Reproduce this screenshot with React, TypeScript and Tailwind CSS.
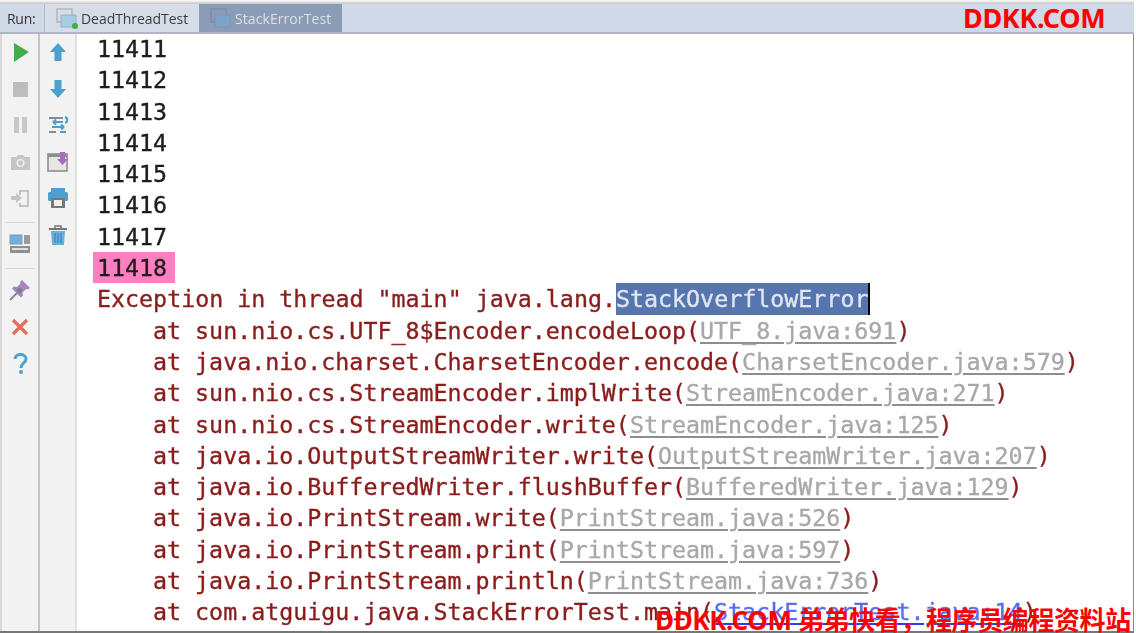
import React from "react";

const mono = "font-['DejaVu_Sans_Mono','Liberation_Mono',monospace]";

const traces: [string, string][] = [
  ["sun.nio.cs.UTF_8$Encoder.encodeLoop", "UTF_8.java:691"],
  ["java.nio.charset.CharsetEncoder.encode", "CharsetEncoder.java:579"],
  ["sun.nio.cs.StreamEncoder.implWrite", "StreamEncoder.java:271"],
  ["sun.nio.cs.StreamEncoder.write", "StreamEncoder.java:125"],
  ["java.io.OutputStreamWriter.write", "OutputStreamWriter.java:207"],
  ["java.io.BufferedWriter.flushBuffer", "BufferedWriter.java:129"],
  ["java.io.PrintStream.write", "PrintStream.java:526"],
  ["java.io.PrintStream.print", "PrintStream.java:597"],
  ["java.io.PrintStream.println", "PrintStream.java:736"],
];

const TabIcon = ({ dot, dim }: { dot?: boolean; dim?: boolean }) => (
  <svg width="22" height="22" viewBox="0 0 22 22" className="shrink-0">
    <rect x="1" y="2" width="15" height="13" fill="none" stroke={dim ? "#7f8ca3" : "#b5b5b5"} strokeWidth="1.5" />
    <rect x="5" y="8" width="15" height="12" fill={dim ? "#7ea3c9" : "#a9cce6"} stroke={dim ? "#7896b8" : "#8fb2cc"} />
    {dot && <circle cx="19" cy="19" r="3" fill="#3fae49" />}
  </svg>
);

const Tool = ({ children }: { children: React.ReactNode }) => (
  <div className="h-[36.5px] flex items-center justify-center">
    <svg width="24" height="24" viewBox="0 0 24 24">
      {children}
    </svg>
  </div>
);

const TraceLine = ({ call, file }: { call: string; file: string }) => (
  <div className="h-[31.3px] pl-[56px] text-[#8a1c1c] whitespace-pre">
    at {call}(
    <span className="text-[#a8a8a8] underline decoration-[#8e8e8e] underline-offset-[3px]">{file}</span>)
  </div>
);

export default function App() {
  return (
    <div className="relative w-[1136px] h-[633px] overflow-hidden bg-white">
      <div className="w-full h-full flex flex-col blur-[0.5px]">
        <div className="h-[4px] shrink-0 mr-[2px] bg-linear-to-b from-white to-[#c4c4c4]" />
        {/* tab bar */}
        <div className="h-[30px] shrink-0 flex bg-[#d0d9e8] border-b-2 border-[#aeb6c6] mr-[2px] font-['Open_Sans',sans-serif] text-[14px]">
          <div className="w-[45px] flex items-center pl-[7px] text-[#333] border-r border-[#b4bccb] tracking-[-0.3px]">Run:</div>
          <div className="w-[154px] flex items-center gap-[3px] pl-[11px] text-[#3c3c3c] bg-[#d6dde9]">
            <TabIcon dot />
            <span className="text-[14px] tracking-[-0.05px]">DeadThreadTest</span>
          </div>
          <div className="w-[143px] flex items-center gap-[3px] pl-[11px] text-[#d9dfe9] bg-[#8d9cb6]">
            <TabIcon dim />
            <span className="text-[14px] tracking-[0.08px]">StackErrorTest</span>
          </div>
        </div>

        <div className="flex-1 flex min-h-0 mr-[2px] border-b-2 border-r border-b-[#777777] border-r-[#8c8c8c] bg-white">
          {/* run actions */}
          <div className="w-[2px] shrink-0 bg-[#d8d8d8]" />
          <div className="w-[36px] shrink-0 bg-[#f2f2f2] flex flex-col">
            <Tool>
              <polygon points="6,3 21,12 6,22" fill="#3fae49" />
            </Tool>
            <Tool>
              <rect x="5" y="5" width="15" height="15" fill="#bdbdbd" />
            </Tool>
            <Tool>
              <rect x="6" y="4" width="5" height="16" fill="#c8c8c8" />
              <rect x="14" y="4" width="5" height="16" fill="#c8c8c8" />
            </Tool>
            <Tool>
              <path d="M3 7h5l2-2h5l2 2h5v13H3z" fill="#c6c6c6" />
              <circle cx="12.5" cy="13" r="4" fill="#ececec" />
              <circle cx="12.5" cy="13" r="2.4" fill="#c6c6c6" />
            </Tool>
            <Tool>
              <path d="M11 4h10v17H11v-4h2v2h6V6h-6v3h-2z" fill="#c4c4c4" />
              <path d="M3 10h5V7l6 5-6 5v-3H3z" fill="#c4c4c4" />
            </Tool>
            <div className="h-px mx-[4px] mt-[5px] bg-[#d6d6d6]" />
            <div className="mt-[3px]">
              <Tool>
                <rect x="2" y="3" width="12" height="9" fill="#6fb0dc" stroke="#8b9aa6" />
                <rect x="16" y="3" width="6" height="9" fill="#9a9a9a" />
                <rect x="2" y="14" width="20" height="7" fill="#8f8f8f" />
                <rect x="4" y="16" width="16" height="2" fill="#e0e0e0" />
              </Tool>
            </div>
            <div className="h-px mx-[4px] bg-[#d6d6d6] mt-[6px] mb-[3px]" />
            <Tool>
              <path d="M2 22l8-8" stroke="#8c8c8c" strokeWidth="2" />
              <path d="M14 2l8 8-2.500 1.500-1.500-.5-3.500 3.500.5 3-2 2-9-9 2-2 3 .5L12.500 5.500 12 4z" fill="#a583c4" />
              <circle cx="11.500" cy="12.500" r="2.500" fill="#7d7d7d" />
            </Tool>
            <Tool>
              <path d="M5 5l14 14M19 5L5 19" stroke="#e2705f" strokeWidth="3.4" />
            </Tool>
            <Tool>
              <path d="M7 8c0-6 11-6 11 0 0 4-5 4-5 9" fill="none" stroke="#4da3cf" strokeWidth="3" />
              <circle cx="13" cy="21" r="2" fill="#4da3cf" />
            </Tool>
          </div>
          <div className="w-[2px] shrink-0 bg-[#c4c4c4]" />
          {/* console actions */}
          <div className="w-[35px] shrink-0 bg-[#f2f2f2] flex flex-col">
            <Tool>
              <path d="M12 3l8 9h-4.5v9h-7v-9H4z" fill="#4d9fd0" />
            </Tool>
            <Tool>
              <path d="M12 21l8-9h-4.5V3h-7v9H4z" fill="#4d9fd0" />
            </Tool>
            <Tool>
              <path d="M3 5h14M3 19h7" stroke="#8a8a8a" strokeWidth="2.2" />
              <path d="M17 9H7M7 9l3-2.5M7 9l3 2.5" stroke="#4d9fd0" strokeWidth="2" fill="none" />
              <path d="M6 14h12M18 14l-3-2.5M18 14l-3 2.5" stroke="#4d9fd0" strokeWidth="2" fill="none" />
              <path d="M19 4c3 1 3 5 0 6M14 19h6" stroke="#4d9fd0" strokeWidth="2" fill="none" />
            </Tool>
            <Tool>
              <rect x="2" y="4" width="19" height="17" fill="#e6e6e6" stroke="#8f8f8f" strokeWidth="1.6" />
              <rect x="2" y="4" width="19" height="3" fill="#8f8f8f" />
              <path d="M14 2h5v7h3l-5.500 6L11 9h3z" fill="#a66cc4" />
            </Tool>
            <Tool>
              <path d="M5 2h14v5H5z" fill="#4d9fd0" />
              <rect x="2" y="6" width="20" height="9" rx="1.500" fill="#4d9fd0" />
              <rect x="5" y="12" width="14" height="10" fill="#777" />
              <rect x="8" y="14" width="8" height="6" fill="#f0f0f0" />
            </Tool>
            <Tool>
              <path d="M3 6h18" stroke="#777" strokeWidth="2" />
              <path d="M9 5V3h6v2" stroke="#777" strokeWidth="1.500" fill="none" />
              <path d="M5 8h14l-1 14H6z" fill="#6aaedb" />
              <path d="M9 10v10M12 10v10M15 10v10" stroke="#3f86b5" strokeWidth="1.200" />
            </Tool>
          </div>
          <div className="w-[2px] shrink-0 bg-[#e2e2e2]" />

          {/* console output */}
          <div className={`flex-1 min-w-0 overflow-hidden pl-[20px] -mt-[1px] text-[23.3px] leading-[31.3px] [-webkit-text-stroke:0.35px] ${mono}`}>
            {[11411, 11412, 11413, 11414, 11415, 11416, 11417].map((n) => (
              <div key={n} className="h-[31.3px] text-[#1c1c1c]">
                {n}
              </div>
            ))}
            <div className="h-[31.3px] text-[#1c1c1c]">
              <span className="inline-block bg-[#ff7fc0] -ml-[4px] pl-[4px] pr-[8px]">11418</span>
            </div>
            <div className="h-[31.3px] text-[#8a1c1c] whitespace-pre">
              Exception in thread "main" java.lang.
              <span className="inline-block bg-[#5675ad] text-[#dfe6f2] border-r-2 border-black">StackOverflowError</span>
            </div>
            {traces.map(([call, file]) => (
              <TraceLine key={file} call={call} file={file} />
            ))}
            <div className="h-[31.3px] pl-[56px] text-[#8a1c1c] whitespace-pre">
              at com.atguigu.java.StackErrorTest.main(
              <span className="text-[#5a6cf0] underline decoration-[#2f3df0] underline-offset-[3px]">StackErrorTest.java:14</span>)
            </div>
          </div>
        </div>
      </div>

      <div className="absolute left-[963px] top-0 text-[27px] leading-[36px] font-bold text-[#ff0000] font-['Noto_Sans',sans-serif] tracking-[-0.35px]">
        DDKK.COM
      </div>
      <div className="absolute left-[655px] top-[603px] whitespace-nowrap text-[26px] leading-[34px] font-bold text-[#ff0000] font-['Noto_Sans','Noto_Sans_CJK_SC',sans-serif] tracking-[-0.4px]">
        DDKK.COM 弟弟快看，程序员编程资料站
      </div>
    </div>
  );
}
